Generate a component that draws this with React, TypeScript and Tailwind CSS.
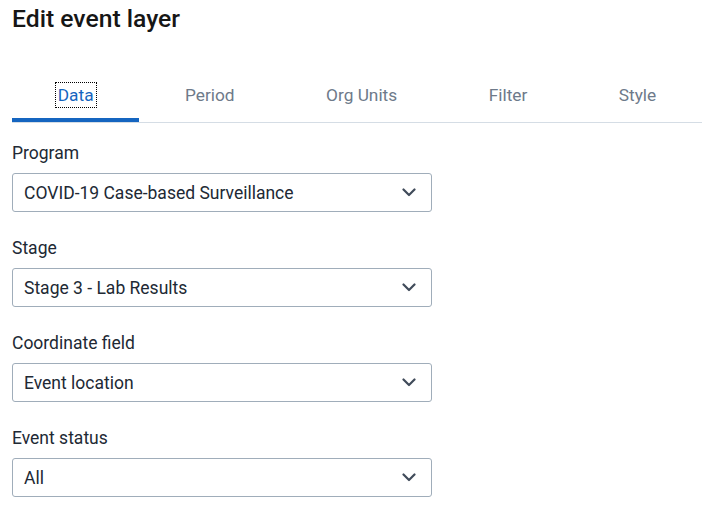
import { useState } from "react";

const tabs = ["Data", "Period", "Org Units", "Filter", "Style"];

interface SelectFieldProps {
  label: string;
  value: string;
}

function Chevron() {
  return (
    <svg width="14" height="9" viewBox="0 0 14 9" fill="none" className="shrink-0">
      <path d="M1.5 1.5L7 7L12.5 1.5" stroke="#404b5a" strokeWidth="2.2" strokeLinecap="round" strokeLinejoin="round" />
    </svg>
  );
}

function SelectField({ label, value }: SelectFieldProps) {
  return (
    <div className="flex flex-col">
      <label className="text-[17.5px] leading-[20px] text-[#212934]">{label}</label>
      <div className="mt-[10px] flex h-[39px] w-[420px] items-center justify-between rounded-[3px] border border-[#a0adba] bg-white pl-[11px] pr-[15px]">
        <span className="text-[17.5px] leading-[20px] text-[#212934]">{value}</span>
        <Chevron />
      </div>
    </div>
  );
}

export default function App() {
  const [active, setActive] = useState("Data");

  return (
    <div className="min-h-[520px] bg-white px-[12px] pr-[13px] font-['Roboto',sans-serif]">
      <h1 className="pt-[5px] text-[24.7px] font-medium leading-[28px] text-[#161616]">Edit event layer</h1>

      <div className="mt-[40px] flex border-b border-[#d5dde5]">
        {tabs.map((tab) => {
          const selected = tab === active;
          return (
            <button
              key={tab}
              onClick={() => setActive(tab)}
              className="relative flex flex-auto justify-center pt-[12px] pb-[17px]"
            >
              <span
                className={
                  selected
                    ? "text-[17.3px] leading-[20px] text-[#1565c0] outline-1 outline-offset-2 outline-dotted outline-[#000]"
                    : "text-[17.3px] leading-[20px] text-[#6e7a8a]"
                }
              >
                {tab}
              </span>
              {selected ? <span className="absolute bottom-0 left-0 right-0 h-[4px] bg-[#1565c0]" /> : null}
            </button>
          );
        })}
      </div>

      <div className="mt-[20px] flex flex-col gap-[26px]">
        <SelectField label="Program" value="COVID-19 Case-based Surveillance" />
        <SelectField label="Stage" value="Stage 3 - Lab Results" />
        <SelectField label="Coordinate field" value="Event location" />
        <SelectField label="Event status" value="All" />
      </div>
    </div>
  );
}
